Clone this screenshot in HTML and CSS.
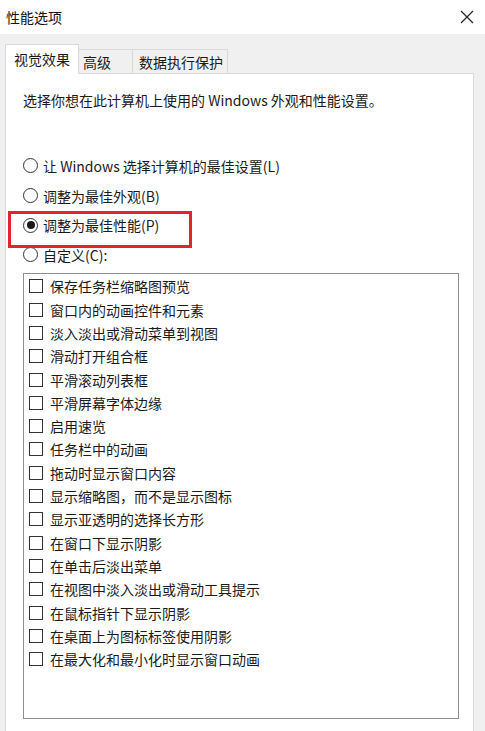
FILE: index.html
```html
<!DOCTYPE html>
<html lang="zh-CN">
<head>
<meta charset="utf-8">
<title>性能选项</title>
<link rel="stylesheet" href="styles.css">
</head>
<body>
<div class="window">
  <div class="titlebar">
    <span class="title">性能选项</span>
    <svg class="close" width="14" height="14" viewBox="0 0 14 14"><path d="M1 1L13 13M13 1L1 13" stroke="#2b2b2b" stroke-width="1.3" fill="none"/></svg>
  </div>
  <div class="tabs">
    <div class="tab active">视觉效果</div>
    <div class="tab tab2">高级</div>
    <div class="tab tab3">数据执行保护</div>
  </div>
  <div class="panel">
    <p class="desc">选择你想在此计算机上使用的 Windows 外观和性能设置。</p>
    <div class="radios">
      <div class="radio-row"><span class="radio"></span><span>让 Windows 选择计算机的最佳设置(L)</span></div>
      <div class="radio-row"><span class="radio"></span><span>调整为最佳外观(B)</span></div>
      <div class="radio-row marked"><span class="radio checked"></span><span>调整为最佳性能(P)</span><span class="highlight"></span></div>
      <div class="radio-row"><span class="radio"></span><span>自定义(C):</span></div>
    </div>
    <div class="listbox">
      <div class="item"><span class="check"></span><span>保存任务栏缩略图预览</span></div>
      <div class="item"><span class="check"></span><span>窗口内的动画控件和元素</span></div>
      <div class="item"><span class="check"></span><span>淡入淡出或滑动菜单到视图</span></div>
      <div class="item"><span class="check"></span><span>滑动打开组合框</span></div>
      <div class="item"><span class="check"></span><span>平滑滚动列表框</span></div>
      <div class="item"><span class="check"></span><span>平滑屏幕字体边缘</span></div>
      <div class="item"><span class="check"></span><span>启用速览</span></div>
      <div class="item"><span class="check"></span><span>任务栏中的动画</span></div>
      <div class="item"><span class="check"></span><span>拖动时显示窗口内容</span></div>
      <div class="item"><span class="check"></span><span>显示缩略图，而不是显示图标</span></div>
      <div class="item"><span class="check"></span><span>显示亚透明的选择长方形</span></div>
      <div class="item"><span class="check"></span><span>在窗口下显示阴影</span></div>
      <div class="item"><span class="check"></span><span>在单击后淡出菜单</span></div>
      <div class="item"><span class="check"></span><span>在视图中淡入淡出或滑动工具提示</span></div>
      <div class="item"><span class="check"></span><span>在鼠标指针下显示阴影</span></div>
      <div class="item"><span class="check"></span><span>在桌面上为图标标签使用阴影</span></div>
      <div class="item"><span class="check"></span><span>在最大化和最小化时显示窗口动画</span></div>
    </div>
  </div>
</div>
</body>
</html>
```
FILE: styles.css
```css
* { box-sizing: border-box; }
html, body {
  margin: 0;
  padding: 0;
  background: #f0f0f0;
}
body {
  width: 485px;
  height: 731px;
  overflow: hidden;
  font-family: "Microsoft YaHei", "Noto Sans CJK SC", "Noto Sans", sans-serif;
  font-size: 14px;
  color: #1a1a1a;
}
.window {
  display: flex;
  flex-direction: column;
  height: 731px;
}
.titlebar {
  height: 34px;
  background: #ffffff;
  display: flex;
  align-items: center;
  justify-content: space-between;
  padding: 0 11px 0 6px;
  flex: none;
}
.title {
  font-size: 14px;
  line-height: 20px;
  color: #111;
}
.close { display: block; margin-top: -1px; }
.tabs {
  display: flex;
  align-items: flex-end;
  margin-top: 10px;
  padding-left: 5px;
  height: 30px;
  flex: none;
  margin-bottom: -1px;
}
.tab {
  border: 1px solid #d9d9d9;
  border-bottom: none;
  line-height: 22px;
  height: 25px;
  white-space: nowrap;
  color: #1a1a1a;
}
.tab.active {
  width: 74px;
  height: 30px;
  background: #ffffff;
  padding: 2px 0 0 8px;
  line-height: 24px;
  position: relative;
  z-index: 1;
}
.tab2 {
  width: 54px;
  padding: 1px 0 0 4px;
  border-left: none;
}
.tab3 {
  width: 95px;
  padding: 1px 0 0 6px;
  border-left: none;
}
.panel {
  flex: 1;
  margin-left: 5px;
  width: 469px;
  background: #ffffff;
  border: 1px solid #d9d9d9;
  border-bottom: none;
  padding: 16px 0 0 17px;
}
.desc {
  margin: 0;
  line-height: 20px;
}
.radios {
  margin-top: 41px;
  display: flex;
  flex-direction: column;
}
.radio-row {
  height: 29.7px;
  display: flex;
  align-items: center;
  gap: 5px;
  white-space: nowrap;
}
.marked { position: relative; }
.radio {
  width: 15px;
  height: 15px;
  border: 1px solid #333;
  border-radius: 50%;
  flex: none;
  display: flex;
  align-items: center;
  justify-content: center;
}
.radio.checked::after {
  content: "";
  width: 8px;
  height: 8px;
  border-radius: 50%;
  background: #1a1a1a;
}
.highlight {
  position: absolute;
  left: -15px;
  top: 1px;
  width: 184px;
  height: 37px;
  border: 3px solid #e3242b;
}
.listbox {
  margin-top: 3px;
  width: 436px;
  height: 446px;
  border: 1px solid #8f8f8f;
  padding: 1px 0 0 5px;
}
.item {
  height: 23.3px;
  display: flex;
  align-items: center;
  gap: 7px;
  white-space: nowrap;
}
.check {
  width: 14px;
  height: 14px;
  border: 1px solid #333;
  flex: none;
}
```
